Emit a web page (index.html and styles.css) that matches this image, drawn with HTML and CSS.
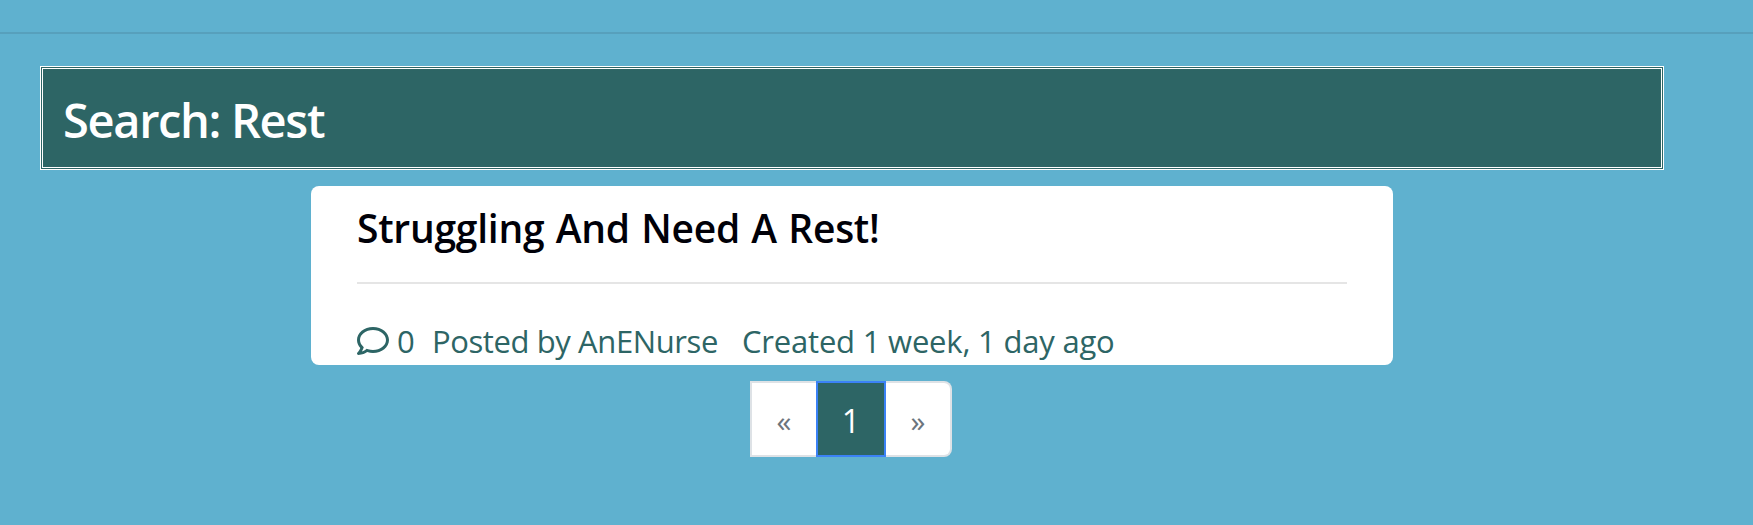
FILE: index.html
```html
<!DOCTYPE html>
<html lang="en">
<head>
<meta charset="utf-8">
<title>Search: Rest</title>
<link rel="stylesheet" href="styles.css">
</head>
<body>
<hr class="top-rule">
<main class="container">
  <h1 class="search-title">Search: Rest</h1>
  <article class="card">
    <h2 class="card-title">Struggling And Need A Rest!</h2>
    <hr class="card-rule">
    <div class="meta">
      <svg class="comment-icon" viewBox="0 0 512 512" aria-hidden="true"><path fill="currentColor" d="M256 32C114.600 32 0 125.100 0 240c0 47.600 19.900 91.200 52.900 126.300C38 405.700 7 439.100 6.500 439.500c-6.600 7-8.400 17.200-4.600 26S14.400 480 24 480c61.500 0 110-25.700 139.100-46.300C192 442.800 223.200 448 256 448c141.400 0 256-93.100 256-208S397.400 32 256 32zm0 368c-26.700 0-53.100-4.100-78.400-12.100l-22.700-7.200-19.500 13.800c-14.300 10.100-33.900 21.400-57.500 29 7.300-12.100 14.400-25.700 19.900-40.200l10.600-28.100-20.600-21.800C69.700 314.100 48 282.200 48 240c0-88.200 93.300-160 208-160s208 71.800 208 160-93.300 160-208 160z"/></svg>
      <span class="count">0</span>
      <span class="author">Posted by AnENurse</span>
      <span class="created">Created 1 week, 1 day ago</span>
    </div>
  </article>
  <nav class="pagination">
    <span class="page prev">«</span>
    <span class="page active">1</span>
    <span class="page next">»</span>
  </nav>
</main>
</body>
</html>
```
FILE: styles.css
```css
* { box-sizing: border-box; }
body {
  margin: 0;
  background: #5fb1cf;
  font-family: "Open Sans", "Noto Sans", sans-serif;
  color: #2d6565;
}
.top-rule {
  height: 2px;
  margin: 32px 0;
  border: 0;
  background: #57a0bc;
}
.container {
  display: flex;
  flex-direction: column;
  align-items: center;
  width: 1624px;
  margin-left: 40px;
}
.search-title {
  width: 100%;
  height: 104px;
  margin: 0 0 16px;
  padding: 0 20px;
  border: 3px double #fff;
  background: #2d6565;
  color: #fff;
  font-size: 47px;
  font-weight: 600;
  line-height: 102px;
  letter-spacing: -1.35px;
  white-space: nowrap;
}
.card {
  width: 1082px;
  height: 179px;
  padding: 16px 46px 0;
  border-radius: 8px;
  background: #fff;
}
.card-title {
  height: 48px;
  margin: 0;
  color: #000008;
  font-size: 39px;
  font-weight: 600;
  line-height: 51px;
  letter-spacing: -0.25px;
  word-spacing: 1.5px;
  white-space: nowrap;
}
.card-rule {
  height: 2px;
  margin: 32px 0;
  border: 0;
  background: #e5e5e5;
}
.meta {
  display: flex;
  height: 48px;
  font-size: 31px;
  line-height: 51px;
  white-space: nowrap;
}
.comment-icon {
  width: 32px;
  height: 32px;
  margin-top: 9px;
}
.count { margin-left: 8px; width: 35px; }
.author { width: 310px; letter-spacing: -0.4px; }
.created { letter-spacing: -0.2px; }
.pagination {
  display: flex;
  height: 76px;
  margin: 16px 2px 0 0;
  font-size: 32px;
  line-height: 76px;
  text-align: center;
}
.page {
  width: 66px;
  border: 2px solid #dee2e6;
  background: #fff;
  color: #6c757d;
}
.prev, .next { font-size: 30px; }
.prev { border-right: 0; }
.active { width: 70px; border-color: #3b82f6; background: #2d6565; color: #fff; }
.next { border-left: 0; border-radius: 0 8px 8px 0; }
```
